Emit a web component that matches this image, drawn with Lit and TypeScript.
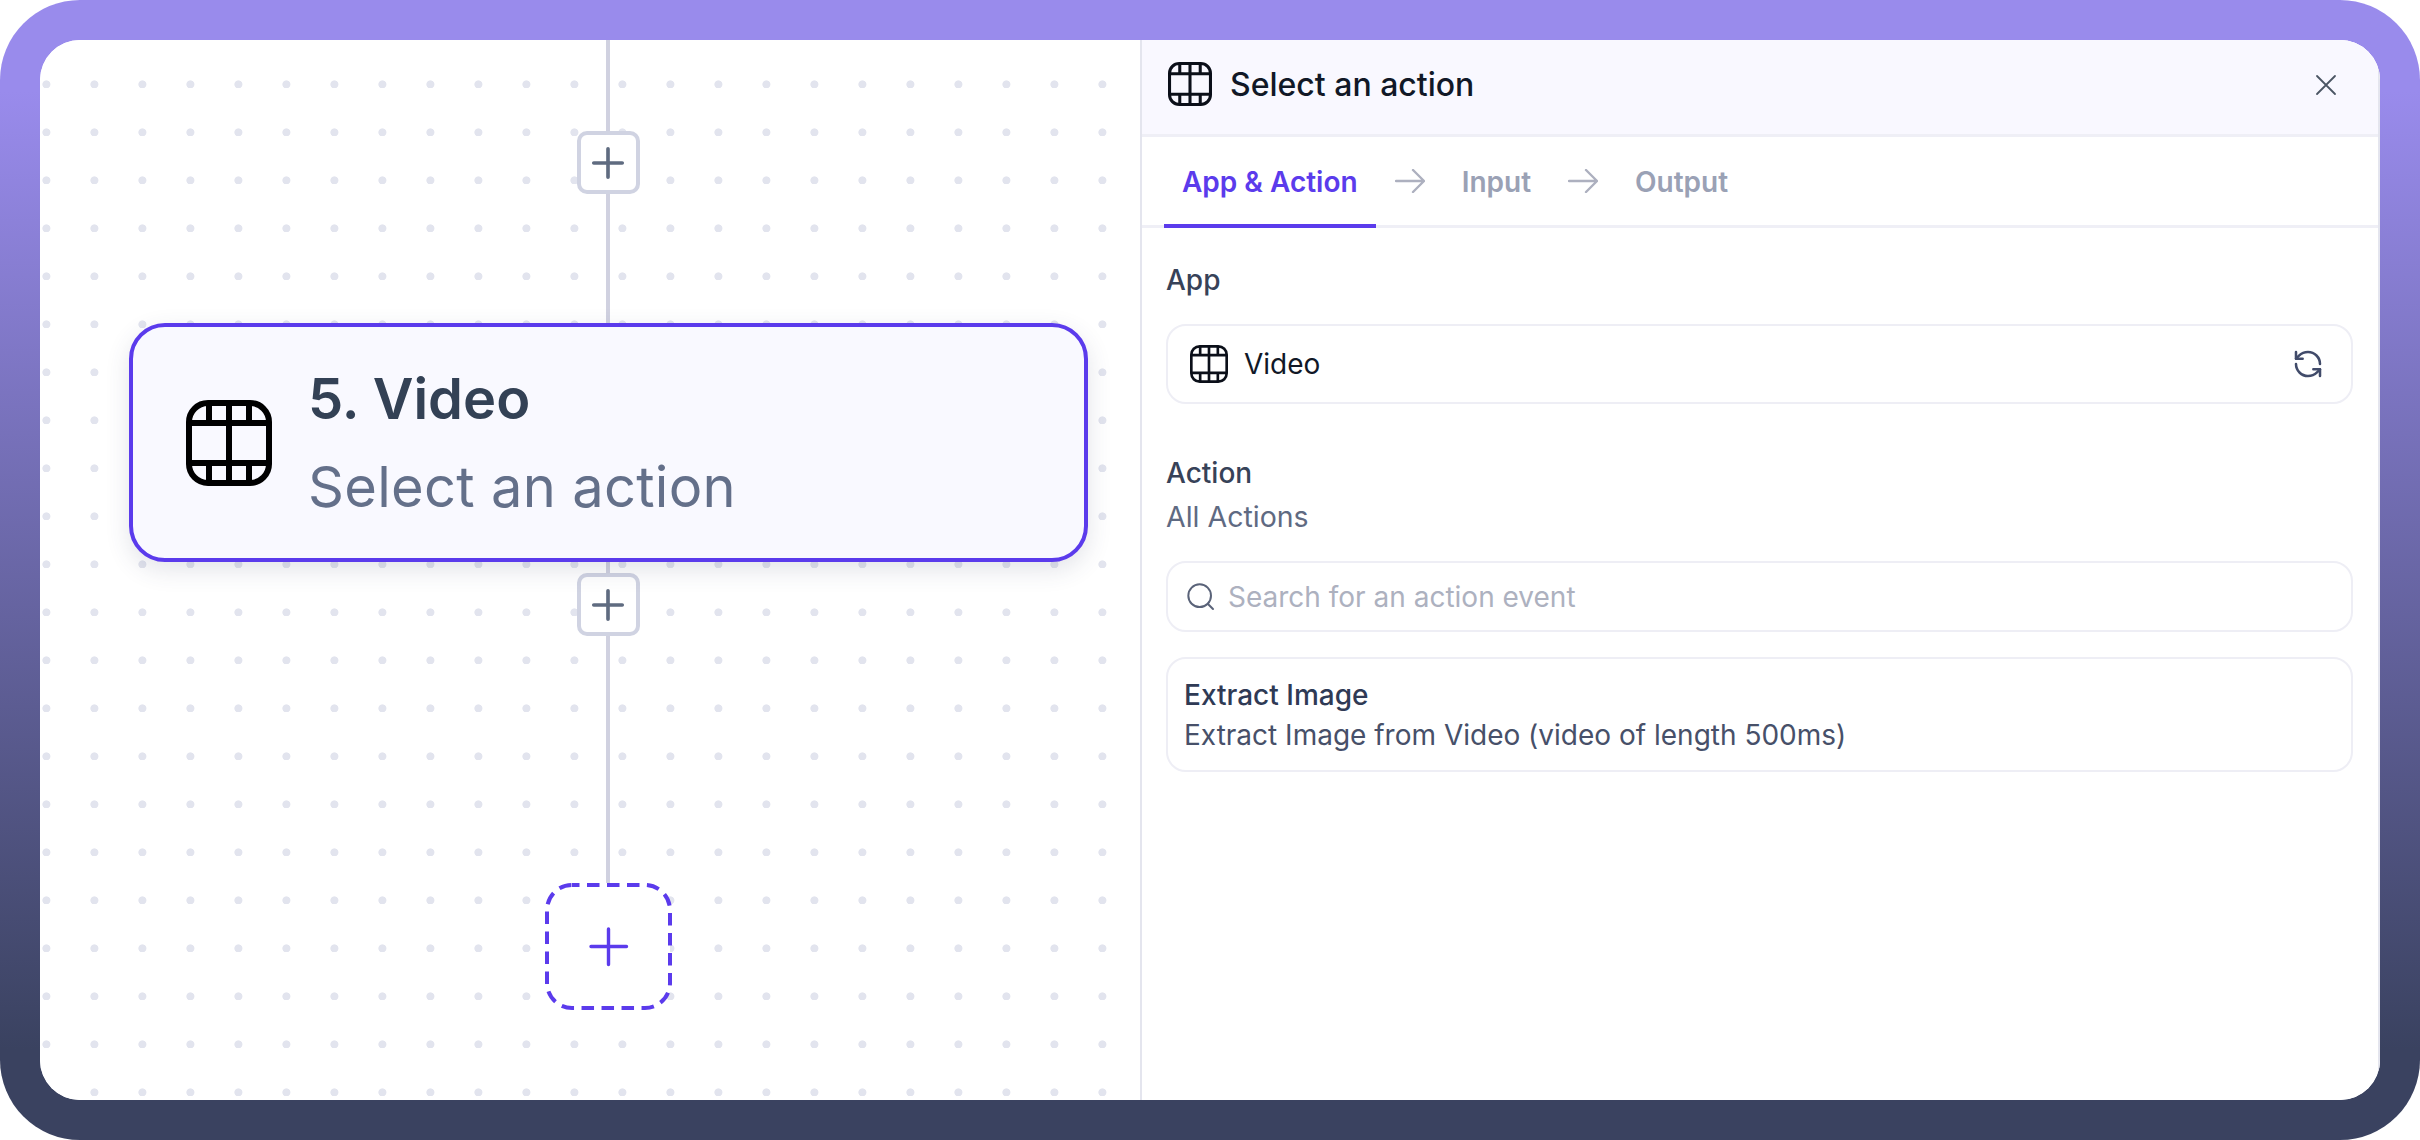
import { LitElement, html, css, svg } from "lit";
import { customElement } from "lit/decorators.js";

const film = svg`<rect x="3" y="3" width="80" height="80" rx="19" fill="none" stroke="currentColor" stroke-width="6"/>
<path d="M3 23H83M3 63H83M43 3V83M23 3V23M63 3V23M23 63V83M63 63V83" fill="none" stroke="currentColor" stroke-width="6"/>`;
const plus = svg`<path d="M12 3V21M3 12H21" fill="none" stroke="currentColor" stroke-linecap="round"/>`;
const arrow = svg`<path d="M1 12H29M18 1L29 12L18 23" fill="none" stroke="currentColor" stroke-width="2.4" stroke-linecap="round" stroke-linejoin="round"/>`;

@customElement("app-root")
export class AppRoot extends LitElement {
  static styles = css`
    :host { display: block; width: 2420px; height: 1140px; font-family: Inter, "Noto Sans", sans-serif; background: #fff; }
    * { box-sizing: border-box; }
    svg { display: block; flex: none; }
    .frame { width: 2420px; height: 1140px; padding: 40px; border-radius: 80px;
      background: linear-gradient(180deg, #998bec 8%, #3a4260 92%); }
    .inner { width: 2340px; height: 1060px; border-radius: 40px; overflow: hidden; background: #fff; display: flex; }

    .canvas { width: 1100px; height: 100%; flex: none; padding-left: 36px; display: flex; flex-direction: column; align-items: center;
      background-color: #fff;
      background-image: radial-gradient(circle at 6.4px 44.4px, #e2e4ee 3.6px, transparent 4.4px);
      background-size: 48px 48px; }
    .line { width: 4px; background: #d0d1e0; flex: none; }
    .l1 { height: 91px; } .l2 { height: 129px; } .l3 { height: 11px; } .l4 { height: 247px; }
    .add { width: 63px; height: 63px; flex: none; background: #fff; border: 4px solid #d0d3e2; border-radius: 10px;
      display: flex; align-items: center; justify-content: center; color: #5f6b80; }
    .add svg { width: 38px; height: 38px; stroke-width: 2.3; }
    .node { width: 959px; height: 239px; margin-left: 1px; flex: none; position: relative; z-index: 1; background: #f9f9ff; border: 4px solid #5b3bec; border-radius: 36px;
      box-shadow: 0 8px 24px rgba(60, 64, 100, 0.14); display: flex; align-items: center; gap: 36px; padding-left: 53px; }
    .node-icon { width: 86px; height: 86px; color: #000; }
    .node-text { display: flex; flex-direction: column; gap: 20px; }
    .node-title { font-size: 56px; line-height: 68px; font-weight: 600; color: #334155; white-space: nowrap; }
    .node-sub { font-size: 56px; line-height: 68px; font-weight: 400; color: #64708a; white-space: nowrap; letter-spacing: 0.3px; }
    .drop { width: 127px; height: 127px; color: #5b3bec; }

    .panel { flex: 1; min-width: 0; height: 100%; background: #fff; border-left: 2px solid #e4e5ee; border-right: 2px solid #e4e5ee; display: flex; flex-direction: column; }
    .head { height: 97px; flex: none; background: #f9f8ff; border-bottom: 3px solid #efeff6; display: flex; align-items: center; padding: 0 40px 6px 26px; gap: 18px; }
    .head-icon { width: 44px; height: 44px; color: #0b0f19; }
    .head-title { flex: 1; font-size: 32px; font-weight: 500; color: #111827; }
    .close { width: 24px; height: 24px; color: #4b5563; margin-top: 2px; }

    .tabs { height: 91px; flex: none; border-bottom: 3px solid #efeff6; display: flex; align-items: stretch; padding-left: 22px; }
    .tab { font-size: 28px; font-weight: 600; color: #9aa1b5; display: flex; align-items: center; white-space: nowrap; padding-top: 2px; }
    .tab.active { color: #5b3bec; padding: 2px 18px 0; height: 91px; border-bottom: 4px solid #5b3bec; }
    .arrow { width: 30px; height: 24px; color: #adb0bf; align-self: center; margin: 0 37px 0 19px; }
    .arrow.second { margin-left: 37px; }

    .body { padding: 0 25px 0 24px; display: flex; flex-direction: column; }
    .label { font-size: 28px; line-height: 36px; font-weight: 500; color: #374258; }
    .app-label { margin-top: 34px; }
    .box { border: 2px solid #eeeef5; border-radius: 20px; display: flex; align-items: center; background: #fff; }
    .app { height: 80px; margin-top: 26px; padding: 0 27px 0 22px; gap: 16px; }
    .app-icon { width: 38px; height: 38px; color: #0b0f19; }
    .app-name { flex: 1; font-size: 28px; color: #111827; }
    .refresh { width: 32px; height: 32px; color: #414b6a; }
    .action-label { margin-top: 51px; }
    .all { font-size: 28.5px; line-height: 36px; color: #5f6a82; margin-top: 8px; }
    .search { height: 71px; margin-top: 26px; padding-left: 17px; gap: 11px; }
    .search svg { width: 32px; height: 32px; color: #5a6379; }
    .placeholder { font-size: 28px; color: #adb1bf; white-space: nowrap; }
    .item { height: 115px; margin-top: 25px; flex-direction: column; align-items: flex-start; justify-content: center; padding: 0 16px; gap: 4px; }
    .item-title { font-size: 28px; line-height: 36px; font-weight: 500; color: #2f3a55; }
    .item-desc { font-size: 28px; line-height: 36px; color: #475069; white-space: nowrap; }
  `;

  render() {
    return html`<div class="frame"><div class="inner">
      <section class="canvas">
        <div class="line l1"></div>
        <div class="add"><svg viewBox="0 0 24 24">${plus}</svg></div>
        <div class="line l2"></div>
        <div class="node">
          <svg class="node-icon" viewBox="0 0 86 86">${film}</svg>
          <div class="node-text">
            <div class="node-title">5. Video</div>
            <div class="node-sub">Select an action</div>
          </div>
        </div>
        <div class="line l3"></div>
        <div class="add"><svg viewBox="0 0 24 24">${plus}</svg></div>
        <div class="line l4"></div>
        <svg class="drop" viewBox="0 0 127 127">
          <rect x="2" y="2" width="123" height="123" rx="25" fill="#fff" stroke="currentColor" stroke-width="4" stroke-dasharray="12.5 7.5" stroke-dashoffset="5"/>
          <path d="M63.5 46V81.5M46 63.5H81.5" fill="none" stroke="currentColor" stroke-width="3.4" stroke-linecap="round"/>
        </svg>
      </section>
      <aside class="panel">
        <header class="head">
          <svg class="head-icon" viewBox="0 0 86 86">${film}</svg>
          <div class="head-title">Select an action</div>
          <svg class="close" viewBox="0 0 24 24"><path d="M3 3L21 21M21 3L3 21" fill="none" stroke="currentColor" stroke-width="1.8" stroke-linecap="round"/></svg>
        </header>
        <nav class="tabs">
          <div class="tab active">App &amp; Action</div>
          <svg class="arrow" viewBox="0 0 30 24">${arrow}</svg>
          <div class="tab">Input</div>
          <svg class="arrow second" viewBox="0 0 30 24">${arrow}</svg>
          <div class="tab">Output</div>
        </nav>
        <div class="body">
          <div class="label app-label">App</div>
          <div class="box app">
            <svg class="app-icon" viewBox="0 0 86 86">${film}</svg>
            <div class="app-name">Video</div>
            <svg class="refresh" viewBox="0 0 24 24" fill="none" stroke="currentColor" stroke-width="1.9" stroke-linecap="round" stroke-linejoin="round"><path d="M21 12a9 9 0 0 0-9-9 9.75 9.75 0 0 0-6.74 2.74L3 8"/><path d="M3 3v5h5"/><path d="M3 12a9 9 0 0 0 9 9 9.75 9.75 0 0 0 6.74-2.74L21 16"/><path d="M16 16h5v5"/></svg>
          </div>
          <div class="label action-label">Action</div>
          <div class="all">All Actions</div>
          <div class="box search">
            <svg viewBox="0 0 24 24" fill="none" stroke="currentColor" stroke-width="1.5" stroke-linecap="round"><circle cx="11" cy="11" r="8.5"/><path d="M21 21L17.2 17.2"/></svg>
            <div class="placeholder">Search for an action event</div>
          </div>
          <div class="box item">
            <div class="item-title">Extract Image</div>
            <div class="item-desc">Extract Image from Video (video of length 500ms)</div>
          </div>
        </div>
      </aside>
    </div></div>`;
  }
}
